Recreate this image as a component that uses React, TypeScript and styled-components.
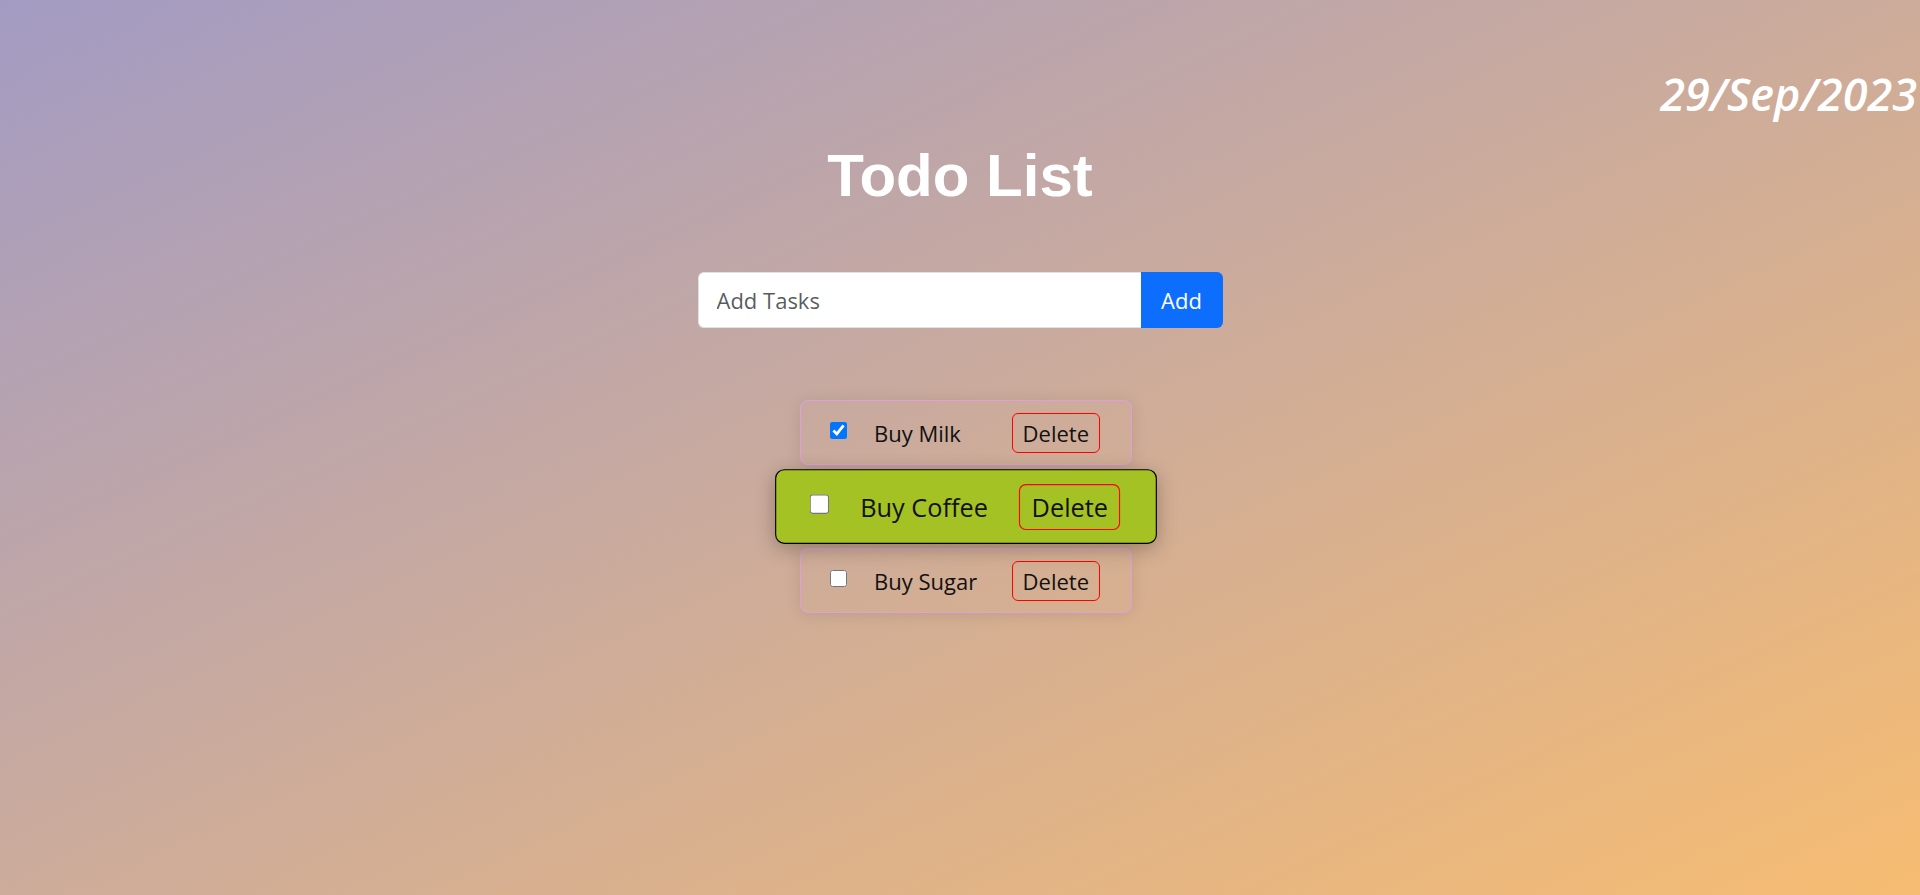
import React from 'react';
import styled, { createGlobalStyle } from 'styled-components';

const GlobalStyle = createGlobalStyle`
  html, body { margin: 0; padding: 0; }
  body { font-family: "Open Sans", "Noto Sans", sans-serif; }
  * { box-sizing: border-box; }
`;

const Page = styled.div`
  min-height: 100vh;
  background: linear-gradient(to bottom right, #a39bc3, #f6bc72);
  display: flex;
  flex-direction: column;
  align-items: center;
`;

const DateBar = styled.header`
  width: 100%;
  display: flex;
  justify-content: flex-end;
  padding: 69px 3px 0 0;
`;

const DateText = styled.span`
  font-family: "Open Sans", sans-serif;
  font-style: italic;
  font-weight: 600;
  font-size: 45px;
  line-height: 50px;
  color: #ffffff;
`;

const Title = styled.h1`
  margin: 23px 0 0;
  font-family: "Liberation Sans", Arial, sans-serif;
  font-weight: 700;
  font-size: 60px;
  line-height: 67px;
  color: #ffffff;
`;

const InputGroup = styled.form`
  margin-top: 63px;
  display: flex;
  width: 525px;
  height: 56px;
`;

const TaskInput = styled.input`
  flex: 1;
  min-width: 0;
  border: 1px solid #dee2e6;
  border-right: none;
  border-radius: 6px 0 0 6px;
  padding: 0 18px;
  font-family: "Open Sans", sans-serif;
  font-size: 22px;
  color: #212529;
  background: #ffffff;
  outline: none;
  &::placeholder {
    color: rgba(33, 37, 41, 0.75);
  }
`;

const AddButton = styled.button`
  width: 82px;
  border: none;
  border-radius: 0 6px 6px 0;
  background: #0d6efd;
  color: #ffffff;
  font-family: "Open Sans", sans-serif;
  font-size: 22px;
  cursor: pointer;
`;

const List = styled.ul`
  list-style: none;
  margin: 72px 0 0;
  padding: 0 0 0 12px;
  display: flex;
  flex-direction: column;
  gap: 9px;
`;

const Card = styled.li<{ $active?: boolean }>`
  position: relative;
  width: 332px;
  height: 65px;
  border: 1px solid ${(p) => (p.$active ? '#000000' : 'plum')};
  border-radius: 8px;
  background: ${(p) => (p.$active ? '#a4c224' : 'transparent')};
  display: grid;
  grid-template-columns: 17px 1fr auto;
  column-gap: 27px;
  align-items: center;
  padding: 0 31px 0 29px;
  transform: ${(p) => (p.$active ? 'scale(1.15)' : 'none')};
  box-shadow: ${(p) =>
    p.$active ? '0 4px 18px rgba(0, 0, 0, 0.28)' : '0 2px 16px rgba(0, 0, 0, 0.1)'};
  z-index: ${(p) => (p.$active ? 2 : 1)};
`;

const Check = styled.input`
  width: 17px;
  height: 17px;
  margin: -4px 0 0;
`;

const TaskName = styled.span`
  font-size: 22px;
  color: #111111;
  white-space: nowrap;
`;

const DeleteButton = styled.button`
  font-family: "Open Sans", sans-serif;
  font-size: 22px;
  line-height: 30px;
  padding: 4px 10px;
  border: 1px solid #ff0000;
  border-radius: 6px;
  background: transparent;
  color: #111111;
  cursor: pointer;
`;

const tasks = [
  { name: 'Buy Milk', done: true, active: false },
  { name: 'Buy Coffee', done: false, active: true },
  { name: 'Buy Sugar', done: false, active: false },
];

export default function App() {
  return (
    <>
      <GlobalStyle />
      <Page>
        <DateBar>
          <DateText>29/Sep/2023</DateText>
        </DateBar>
        <Title>Todo List</Title>
        <InputGroup onSubmit={(e) => e.preventDefault()}>
          <TaskInput placeholder="Add Tasks" />
          <AddButton type="submit">Add</AddButton>
        </InputGroup>
        <List>
          {tasks.map((t) => (
            <Card key={t.name} $active={t.active}>
              <Check type="checkbox" defaultChecked={t.done} />
              <TaskName>{t.name}</TaskName>
              <DeleteButton>Delete</DeleteButton>
            </Card>
          ))}
        </List>
      </Page>
    </>
  );
}
